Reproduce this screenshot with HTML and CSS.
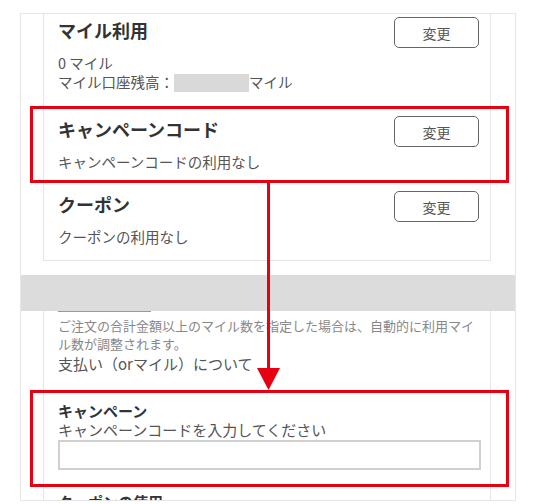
FILE: index.html
```html
<!DOCTYPE html>
<html lang="ja">
<head>
    <meta charset="UTF-8">
    <meta name="viewport" content="width=device-width, initial-scale=1.0">
    <title>お支払い方法</title>
    <link rel="stylesheet" href="styles.css">
</head>
<body>
    <div class="frame">
        <div class="card">
            <div class="row row-mile">
                <div class="row-text">
                    <div class="row-title">マイル利用</div>
                    <div class="row-desc">
                        0 マイル<br>
                        マイル口座残高：<span class="masked"></span>マイル
                    </div>
                </div>
                <button class="change-btn">変更</button>
            </div>

            <div class="row">
                <div class="row-text">
                    <div class="row-title">キャンペーンコード</div>
                    <div class="row-desc">キャンペーンコードの利用なし</div>
                </div>
                <button class="change-btn">変更</button>
            </div>

            <div class="row">
                <div class="row-text">
                    <div class="row-title">クーポン</div>
                    <div class="row-desc">クーポンの利用なし</div>
                </div>
                <button class="change-btn">変更</button>
            </div>
        </div>

        <div class="band"></div>

        <div class="card card-lower">
            <div class="tab-line"></div>
            <p class="note">ご注文の合計金額以上のマイル数を指定した場合は、自動的に利用マイル数が調整されます。</p>
            <div class="pay-link">支払い（orマイル）について</div>

            <div class="field">
                <div class="field-title">キャンペーン</div>
                <label class="field-label" for="campaign">キャンペーンコードを入力してください</label>
                <input type="text" id="campaign" class="field-input">
            </div>

            <div class="field-title">クーポンの使用</div>
        </div>
    </div>

    <!-- annotation overlay -->
    <div class="mark mark-top"></div>
    <div class="mark mark-bottom"></div>
    <svg class="arrow" width="28" height="210" viewBox="0 0 28 210">
        <rect x="12" y="0" width="3" height="190" fill="#e60012"/>
        <polygon points="2,185 25,185 13.5,207" fill="#e60012"/>
    </svg>
</body>
</html>
```

FILE: styles.css
```css
body {
    margin: 0;
    font-family: "Noto Sans CJK JP", "Noto Sans", sans-serif;
    background-color: #ffffff;
    color: #555;
}

.frame {
    margin: 13px 0 0 20px;
    width: 494px;
    height: 486px;
    border: 1px solid #e6e6e6;
    overflow: hidden;
}

.card {
    margin-left: 22px;
    width: 421px;
    padding: 3px 11px 14px 14px;
    border-left: 1px solid #e6e6e6;
    border-right: 1px solid #e6e6e6;
    border-bottom: 1px solid #e6e6e6;
}

.row {
    display: flex;
    justify-content: space-between;
    align-items: flex-start;
    margin-bottom: 20px;
}

.row:last-child { margin-bottom: 0; }

.row-mile { margin-bottom: 24px; }

.row-title {
    margin-top: 1px;
    font-size: 18px;
    line-height: 24px;
    font-weight: bold;
    color: #333;
}

.row-desc {
    margin-top: 11px;
    font-size: 14.5px;
    line-height: 19px;
    color: #555;
}

.masked {
    display: inline-block;
    width: 75px;
    height: 18px;
    vertical-align: -4px;
    background-color: #d9d9d9;
}

.change-btn {
    width: 85px;
    height: 31px;
    border: 1.5px solid #666;
    border-radius: 5px;
    background-color: #fff;
    font-family: inherit;
    font-size: 14px;
    color: #555;
    cursor: pointer;
}

.band {
    margin-top: 14px;
    height: 36px;
    background-color: #dcdcdc;
}

.card-lower {
    border-bottom: none;
    padding-top: 0;
    height: 200px;
}

.tab-line {
    width: 93px;
    height: 1px;
    background-color: #999;
}

.note {
    margin: 5px 0 0;
    font-size: 13px;
    line-height: 18px;
    color: #888;
}

.pay-link {
    margin-top: 1px;
    font-size: 15px;
    line-height: 20px;
    color: #555;
}

.field {
    margin-top: 27px;
}

.field-title {
    font-size: 15px;
    line-height: 20px;
    font-weight: bold;
    color: #333;
}

.field-label {
    display: block;
    margin-top: -1px;
    font-size: 15px;
    line-height: 20px;
    color: #555;
}

.field-input {
    display: block;
    box-sizing: border-box;
    width: 423px;
    height: 30px;
    margin: 0 0 22px;
    border: 2px solid #d0d0d0;
    background-color: #fff;
}

.mark {
    position: absolute;
    left: 30px;
    width: 473px;
    border: 3px solid #e60012;
}

.mark-top {
    top: 106px;
    height: 71px;
}

.mark-bottom {
    top: 390px;
    height: 91px;
}

.arrow {
    position: absolute;
    left: 255px;
    top: 183px;
}
```
